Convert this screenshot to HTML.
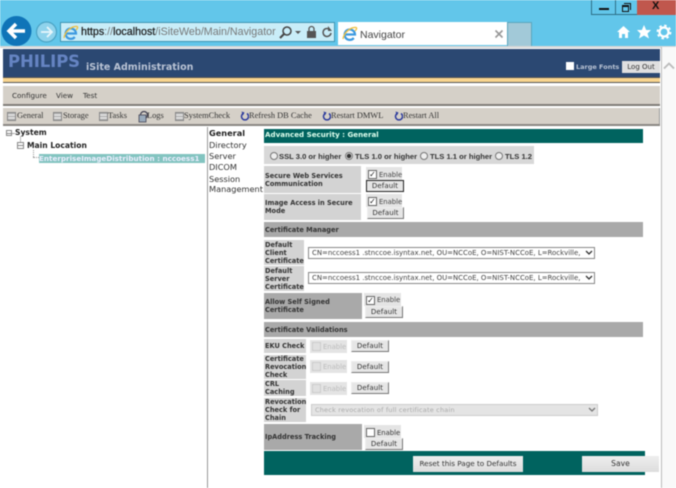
<!DOCTYPE html>
<html><head><meta charset="utf-8"><style>
html,body{margin:0;padding:0;background:#fff}
#p{position:relative;width:676px;height:488px;overflow:hidden;background:#fff;font-family:"DejaVu Sans","Liberation Sans",sans-serif;filter:blur(.45px)}
#p div,#p svg{position:absolute}
.t{white-space:nowrap;color:#222}
.s{font-family:"Liberation Serif",serif;font-size:8.4px;line-height:10px;color:#333;white-space:nowrap;top:111px}
.i{top:112px;width:9px;height:9px;background:repeating-linear-gradient(#aaa 0 1px,#ddd 1px 3px);border:1px solid #888;box-sizing:border-box}
.l{font-size:6.6px;font-weight:bold;line-height:8px;color:#333;padding-left:1px;box-sizing:border-box}
.h{left:264px;width:379px;height:15px;background:#a9a9a9;font-size:6.6px;font-weight:bold;line-height:16px;color:#333;padding-left:1px;box-sizing:border-box}
.b{background:#e6e6e6;border:1px solid;border-color:#eee #777 #777 #eee;box-sizing:border-box;text-align:center;font-size:7px;line-height:11px;color:#333;letter-spacing:.1px}
.e{background:#e4e4e4;box-sizing:border-box;font-size:6.8px;line-height:17px;color:#444;padding-left:13px;white-space:nowrap}
.c{width:9px;height:9px;background:#fff;border:1px solid #666;box-sizing:border-box;top:3px;left:2px;font-size:8px;line-height:7px;text-align:center;color:#222;padding:0}
.d{color:#bbb;line-height:14px}.d .c{background:#e0e0e0;border-color:#ccc;top:2px}
.sel{left:308px;width:287px;height:12px;border:1px solid #888;box-sizing:border-box;background:#fff;font-size:6.95px;line-height:10px;padding-left:3px;color:#444;white-space:nowrap;overflow:hidden}
.ch{width:10px;height:10px;background:#fff}
.r{width:8px;height:8px;border:1px solid #777;border-radius:50%;background:#eee;box-sizing:border-box;top:152px}
.rt{font:bold 7.6px/11px "Liberation Sans",sans-serif;color:#333;top:151px;white-space:nowrap}
</style></head><body><div id="p">
<!-- browser chrome -->
<div style="left:0;top:0;width:676px;height:46px;background:#62c6ea"></div>
<div style="left:0;top:46px;width:676px;height:2px;background:#d8d8d8"></div>
<div style="left:591px;top:0;width:85px;height:15px;background:#62c6ea;border:1px solid #2d6f86;border-top:0;box-sizing:border-box"></div>
<div style="left:615px;top:0;width:1px;height:15px;background:#2d6f86"></div>
<div style="left:637px;top:0;width:39px;height:15px;background:#c0574d"></div>
<div style="left:599px;top:8px;width:10px;height:2px;background:#111"></div>
<div style="left:622px;top:5px;width:7px;height:7px;border:1px solid #111;box-sizing:border-box;border-top-width:2px"></div>
<div style="left:624px;top:3px;width:7px;height:7px;border:1px solid #111;border-left:0;border-bottom:0;box-sizing:border-box"></div>
<div class="t" style="left:652px;top:0;font:bold 11px/13px 'Liberation Sans';color:#111">X</div>
<svg style="left:1px;top:15px" width="32" height="32"><circle cx="15.5" cy="16" r="15" fill="#0f74b8"/><path d="M8 16H24M15 9L8 16L15 23" fill="none" stroke="#fff" stroke-width="3.5"/></svg>
<svg style="left:35px;top:20px" width="24" height="24"><circle cx="11.5" cy="12" r="10" fill="#8fd3ec" stroke="#4aa3c4" stroke-width="1.2"/><path d="M6 12H17M12 7L17 12L12 17" fill="none" stroke="#e8f6fb" stroke-width="1.8"/></svg>
<div style="left:60px;top:22px;width:275px;height:20px;background:#c9edf8;border:1px solid #3f95b3;box-sizing:border-box"></div>
<div style="left:81px;top:25px;font:10.7px/15px 'Liberation Sans',sans-serif;color:#777;white-space:nowrap"><span style="color:#222;-webkit-text-stroke:.25px #222">https</span>://<span style="color:#222;-webkit-text-stroke:.25px #222">localhost</span>/iSiteWeb/Main/Navigator</div>
<svg style="left:63px;top:25px" width="16" height="15"><path d="M3 8.5H13A5.2 5.2 0 1 0 11.8 12" fill="none" stroke="#3d9ae0" stroke-width="2.2"/><path d="M1 13C2 6 9 1 14 1.5C15.5 2 14 4 13 5" fill="none" stroke="#f0c040" stroke-width="1.3"/></svg>
<svg style="left:279px;top:25px" width="56" height="15"><circle cx="8" cy="6" r="4" fill="none" stroke="#444" stroke-width="1.5"/><path d="M5 9L1 13" stroke="#444" stroke-width="2"/><path d="M16 6L22 6L19 9Z" fill="#555"/><rect x="28" y="6" width="9" height="7" fill="#555"/><path d="M30 6V4a2.5 2.5 0 015 0V6" fill="none" stroke="#555" stroke-width="1.3"/><path d="M50 4a4 4 0 102 4" fill="none" stroke="#555" stroke-width="1.5"/><path d="M49 1V6H53Z" fill="#555"/></svg>
<div style="left:338px;top:22px;width:170px;height:23px;background:#fff"></div>
<div style="left:507px;top:22px;width:25px;height:24px;background:#a2c9d8;border:1px solid #5ba5bd;border-bottom:0;box-sizing:border-box"></div>
<svg style="left:342px;top:26px" width="16" height="15"><path d="M3 8.5H13A5.2 5.2 0 1 0 11.8 12" fill="none" stroke="#3d9ae0" stroke-width="2.2"/><path d="M1 13C2 6 9 1 14 1.5C15.5 2 14 4 13 5" fill="none" stroke="#f0c040" stroke-width="1.3"/></svg>
<div class="t" style="left:360px;top:28px;font:10.5px/14px 'Liberation Sans',sans-serif;color:#444">Navigator</div>
<svg style="left:494px;top:29px" width="10" height="10"><path d="M1.5 1.5L8.5 8.5M8.5 1.5L1.5 8.5" stroke="#999" stroke-width="1.6"/></svg>
<svg style="left:616px;top:24px" width="56" height="16"><path d="M1 8L7.5 2L14 8H12V14H9V10H6V14H3V8Z" fill="#fff"/><path d="M28 1L30.2 6H35L31.5 9.5L33 14.5L28 11.5L23 14.5L24.5 9.5L21 6H25.8Z" fill="#fff"/><circle cx="48" cy="8" r="4.5" fill="none" stroke="#fff" stroke-width="2.2"/><circle cx="48" cy="8" r="6.5" fill="none" stroke="#fff" stroke-width="1.8" stroke-dasharray="2.5 2.6"/></svg>
<!-- header -->
<div style="left:3px;top:49px;width:657px;height:28px;background:#2b4872"></div>
<div style="left:8px;top:52px;font:bold 16.5px/20px 'DejaVu Sans';color:#6584c2;white-space:nowrap;letter-spacing:-.1px">PHILIPS</div>
<div style="left:86px;top:61px;font:bold 9.5px/14px 'DejaVu Sans';color:#b9c3d4;white-space:nowrap">iSite Administration</div>
<div style="left:566px;top:62px;width:8px;height:8px;background:#fff"></div>
<div style="left:576px;top:62px;font:bold 6.5px/10px 'DejaVu Sans';color:#b9c3d4;white-space:nowrap">Large Fonts</div>
<div class="b" style="left:622px;top:61px;width:38px;height:12px;border:0;background:#e0e0e0;font-size:7px;line-height:12px;letter-spacing:0">Log Out</div>
<div style="left:3px;top:77px;width:657px;height:1px;background:#555"></div>
<div style="left:3px;top:78px;width:657px;height:4px;background:#f9d58f"></div>
<div style="left:3px;top:82px;width:657px;height:1px;background:#555"></div>
<div style="left:3px;top:86px;width:657px;height:18px;background:#d5d0c8"></div>
<div style="left:3px;top:104px;width:657px;height:2px;background:#807d78"></div>
<div class="t" style="left:12px;top:90px;font-size:7.2px;line-height:11px;color:#333">Configure</div>
<div class="t" style="left:56px;top:90px;font-size:7.2px;line-height:11px;color:#333">View</div>
<div class="t" style="left:83px;top:90px;font-size:7.2px;line-height:11px;color:#333">Test</div>
<!-- toolbar -->
<div style="left:3px;top:108px;width:656px;height:16px;background:#d5d0c8;border-right:1px solid #999"></div>
<div style="left:3px;top:124px;width:657px;height:2px;background:#8a8783"></div>
<div class="i" style="left:7px"></div><div class="s" style="left:17px">General</div>
<div class="i" style="left:53px"></div><div class="s" style="left:63px">Storage</div>
<div class="i" style="left:99px"></div><div class="s" style="left:108px">Tasks</div>
<svg style="left:137px;top:110px" width="12" height="13"><circle cx="7" cy="5" r="3.5" fill="none" stroke="#445" stroke-width="1.3"/><rect x="2" y="5" width="7" height="7" fill="#9ab" stroke="#445" stroke-width=".8"/></svg><div class="s" style="left:147px">Logs</div>
<div class="i" style="left:175px"></div><div class="s" style="left:184px">SystemCheck</div>
<svg style="left:240px;top:111px" width="9" height="10"><path d="M3 2.5a3.5 3.5 0 104 0" fill="none" stroke="#2b3a9c" stroke-width="1.5"/><path d="M1.5 .5L4.5 1.5L3 4.5Z" fill="#2b3a9c"/></svg><div class="s" style="left:249px">Refresh DB Cache</div>
<svg style="left:322px;top:111px" width="9" height="10"><path d="M3 2.5a3.5 3.5 0 104 0" fill="none" stroke="#2b3a9c" stroke-width="1.5"/><path d="M1.5 .5L4.5 1.5L3 4.5Z" fill="#2b3a9c"/></svg><div class="s" style="left:331px">Restart DMWL</div>
<svg style="left:394px;top:111px" width="9" height="10"><path d="M3 2.5a3.5 3.5 0 104 0" fill="none" stroke="#2b3a9c" stroke-width="1.5"/><path d="M1.5 .5L4.5 1.5L3 4.5Z" fill="#2b3a9c"/></svg><div class="s" style="left:403px">Restart All</div>
<!-- scrollbar -->
<div style="left:661px;top:47px;width:15px;height:441px;background:#f9f9f9;border-left:1px solid #bbb;box-sizing:border-box"></div>
<svg style="left:663px;top:62px" width="12" height="8"><path d="M1 6.5L6 1.5L11 6.5" fill="none" stroke="#bbb" stroke-width="1.8"/></svg>
<!-- tree -->
<div style="left:207px;top:127px;width:1px;height:361px;background:#999"></div>
<div style="left:6px;top:130px;width:6px;height:6px;border:1px solid #888;box-sizing:border-box;background:linear-gradient(#888,#888) center/4px 1px no-repeat #fff"></div>
<div style="left:12px;top:133px;width:3px;height:1px;background:#aaa"></div>
<div class="t" style="left:15px;top:127px;font:bold 7.6px/12px 'DejaVu Sans';color:#222">System</div>
<div style="left:20px;top:136px;width:1px;height:6px;background:#bbb"></div>
<div style="left:17px;top:142px;width:7px;height:7px;border:1px solid #888;box-sizing:border-box;background:linear-gradient(#888,#888) center/5px 1px no-repeat #fff"></div>
<div class="t" style="left:27px;top:140px;font:bold 7.6px/12px 'DejaVu Sans';color:#222">Main Location</div>
<div style="left:33px;top:150px;width:1px;height:7px;border-left:1px dotted #999"></div>
<div style="left:33px;top:157px;width:6px;height:1px;border-top:1px dotted #999"></div>
<div class="t" style="left:39px;top:154px;width:166px;height:9px;background:#83c4c0;font:bold 7.2px/9px 'DejaVu Sans';color:#eef;overflow:hidden">EnterpriseImageDistribution : nccoess1</div>
<!-- side menu -->
<div class="t" style="left:209px;top:127px;font:bold 8.2px/12px 'DejaVu Sans'">General</div>
<div class="t" style="left:209px;top:140px;font:8.2px/11px 'DejaVu Sans';color:#333">Directory</div>
<div class="t" style="left:209px;top:151px;font:8.2px/11px 'DejaVu Sans';color:#333">Server</div>
<div class="t" style="left:209px;top:162px;font:8.2px/11px 'DejaVu Sans';color:#333">DICOM</div>
<div class="t" style="left:209px;top:174px;font:8.2px/11px 'DejaVu Sans';color:#333">Session</div>
<div class="t" style="left:209px;top:184px;font:8.2px/11px 'DejaVu Sans';color:#333">Management</div>
<!-- content -->
<div style="left:264px;top:129px;width:379px;height:14px;background:#00635f;color:#dfe;font:bold 7.1px/11px 'DejaVu Sans';padding-left:1px;box-sizing:border-box;white-space:nowrap">Advanced Security : General</div>
<div style="left:264px;top:146px;width:270px;height:18px;background:#d8d8d8"></div>
<div class="r" style="left:270px"></div><div class="rt" style="left:279px">SSL 3.0 or higher</div>
<div class="r" style="left:345px;background:radial-gradient(circle,#333 0 2px,#eee 2.5px)"></div><div class="rt" style="left:355px">TLS 1.0 or higher</div>
<div class="r" style="left:420px"></div><div class="rt" style="left:430px">TLS 1.1 or higher</div>
<div class="r" style="left:495px"></div><div class="rt" style="left:505px">TLS 1.2</div>

<div class="l" style="left:264px;top:166px;width:97px;height:27px;background:#d3d3d3;padding-top:6px">Secure Web Services<br>Communication</div>
<div class="e" style="left:366px;top:167px;width:36px;height:13px"><div class="c">✓</div>Enable</div>
<div class="b" style="left:366px;top:180px;width:38px;height:12px;border:1px solid #222">Default</div>
<div class="l" style="left:264px;top:194px;width:97px;height:26px;background:#d3d3d3;padding-top:5px">Image Access in Secure<br>Mode</div>
<div class="e" style="left:366px;top:194px;width:36px;height:13px"><div class="c">✓</div>Enable</div>
<div class="b" style="left:367px;top:207px;width:37px;height:12px">Default</div>
<div class="h" style="top:222px">Certificate Manager</div>
<div class="l" style="left:264px;top:240px;width:40px;height:25px;background:#d3d3d3;padding-top:1px">Default<br>Client<br>Certificate</div>
<div class="sel" style="top:247px">CN=nccoess1 .stnccoe.isyntax.net, OU=NCCoE, O=NIST-NCCoE, L=Rockville,</div>
<div class="ch" style="left:583px;top:248px"></div>
<svg style="left:585px;top:250px" width="8" height="6"><path d="M1 1L4 4L7 1" fill="none" stroke="#333" stroke-width="1.3"/></svg>
<div class="l" style="left:264px;top:266px;width:40px;height:25px;background:#d3d3d3;padding-top:1px">Default<br>Server<br>Certificate</div>
<div class="sel" style="top:272px">CN=nccoess1 .stnccoe.isyntax.net, OU=NCCoE, O=NIST-NCCoE, L=Rockville,</div>
<div class="ch" style="left:583px;top:273px"></div>
<svg style="left:585px;top:275px" width="8" height="6"><path d="M1 1L4 4L7 1" fill="none" stroke="#333" stroke-width="1.3"/></svg>
<div class="l" style="left:264px;top:293px;width:98px;height:26px;background:#a9a9a9;padding-top:5px">Allow Self Signed<br>Certificate</div>
<div class="e" style="left:364px;top:293px;width:37px;height:13px;line-height:15px"><div class="c">✓</div>Enable</div>
<div class="b" style="left:365px;top:306px;width:38px;height:12px">Default</div>
<div class="h" style="top:322px">Certificate Validations</div>
<div class="l" style="left:264px;top:339px;width:42px;height:14px;background:#d3d3d3;line-height:14px;white-space:nowrap">EKU Check</div>
<div class="e d" style="left:310px;top:340px;width:37px;height:13px"><div class="c">&nbsp;</div>Enable</div>
<div class="b" style="left:351px;top:340px;width:38px;height:12px">Default</div>
<div class="l" style="left:264px;top:355px;width:42px;height:24px;background:#d3d3d3">Certificate<br>Revocation<br>Check</div>
<div class="e d" style="left:310px;top:360px;width:37px;height:13px"><div class="c">&nbsp;</div>Enable</div>
<div class="b" style="left:351px;top:361px;width:38px;height:12px">Default</div>
<div class="l" style="left:264px;top:380px;width:42px;height:16px;background:#d3d3d3">CRL<br>Caching</div>
<div class="e d" style="left:310px;top:382px;width:37px;height:13px"><div class="c">&nbsp;</div>Enable</div>
<div class="b" style="left:351px;top:382px;width:38px;height:12px">Default</div>
<div class="l" style="left:264px;top:398px;width:42px;height:24px;background:#d3d3d3">Revocation<br>Check for<br>Chain</div>
<div class="sel" style="left:311px;top:404px;width:287px;height:12px;background:#e4e4e4;border-color:#ccc;color:#aaa;font-size:6.5px;letter-spacing:.2px">Check revocation of full certificate chain</div>
<svg style="left:588px;top:407px" width="8" height="6"><path d="M1 1L4 4L7 1" fill="none" stroke="#777" stroke-width="1.3"/></svg>
<div class="l" style="left:264px;top:424px;width:98px;height:26px;background:#a9a9a9;line-height:26px">IpAddress Tracking</div>
<div class="e" style="left:364px;top:425px;width:37px;height:13px;color:#333"><div class="c" style="top:3px">&nbsp;</div>Enable</div>
<div class="b" style="left:365px;top:438px;width:38px;height:12px">Default</div>
<div style="left:264px;top:451px;width:381px;height:24px;background:#00635f"></div>
<div class="b" style="left:413px;top:456px;width:110px;height:16px;line-height:15px;border:0;background:linear-gradient(#eee,#ddd);font-size:7.2px;letter-spacing:0">Reset this Page to Defaults</div>
<div class="b" style="left:582px;top:456px;width:77px;height:16px;line-height:15px;border:0;background:linear-gradient(#eee,#ddd);font-size:7.6px;letter-spacing:0">Save</div>
</div></body></html>
